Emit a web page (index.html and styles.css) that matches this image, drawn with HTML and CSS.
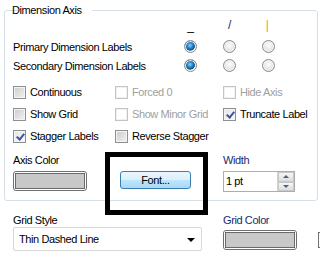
FILE: index.html
```html
<!DOCTYPE html>
<html lang="en">
<head>
  <meta charset="UTF-8" />
  <title>Axis Settings</title>
  <link rel="stylesheet" href="styles.css">
</head>
<body>
  <div class="page">
    <fieldset class="group">
      <legend>Dimension Axis</legend>

      <div class="orient">
        <span></span>
        <span class="mark mark-h">_</span>
        <span class="mark mark-d">/</span>
        <span class="mark mark-v">|</span>

        <span class="lbl">Primary Dimension Labels</span>
        <span class="radio on"></span>
        <span class="radio"></span>
        <span class="radio"></span>

        <span class="lbl">Secondary Dimension Labels</span>
        <span class="radio on"></span>
        <span class="radio"></span>
        <span class="radio"></span>
      </div>

      <div class="checks">
        <label class="chk"><span class="box"></span>Continuous</label>
        <label class="chk off"><span class="box"></span>Forced 0</label>
        <label class="chk off"><span class="box"></span>Hide Axis</label>

        <label class="chk"><span class="box"></span>Show Grid</label>
        <label class="chk off"><span class="box"></span>Show Minor Grid</label>
        <label class="chk"><span class="box checked"></span>Truncate Label</label>

        <label class="chk"><span class="box checked"></span>Stagger Labels</label>
        <label class="chk"><span class="box"></span>Reverse Stagger</label>
        <span></span>
      </div>

      <div class="bottom">
        <div class="field">
          <span class="cap">Axis Color</span>
          <span class="swatch"><span></span></span>
        </div>
        <div class="font-cell">
          <button class="btn">Font...</button>
          <div class="highlight"></div>
        </div>
        <div class="field">
          <span class="cap navy">Width</span>
          <div class="spin">
            <span class="spin-val">1 pt</span>
            <span class="spin-btns">
              <span class="up"></span>
              <span class="down"></span>
            </span>
          </div>
        </div>
      </div>
    </fieldset>

    <div class="below">
      <div class="field">
        <span class="cap">Grid Style</span>
        <div class="select">Thin Dashed Line<span class="arrow"></span></div>
      </div>
      <div class="field">
        <span class="cap navy">Grid Color</span>
        <span class="swatch"><span></span></span>
      </div>
      <span class="stub"></span>
    </div>
  </div>
</body>
</html>
```

FILE: styles.css
```css
body {
  margin: 0;
  background: #fff;
  font-family: "Liberation Sans", Arial, sans-serif;
  font-size: 11px;
  letter-spacing: -0.4px;
  color: #000;
  overflow: hidden;
}
.page {
  width: 320px;
  height: 260px;
  padding-top: 4px;
  box-sizing: border-box;
}
.group {
  margin: 0 2px 0 4px;
  padding: 0 0 0 8px;
  height: 197px;
  border: 1px solid #d5dfe5;
  border-radius: 3px;
  box-sizing: border-box;
  position: relative;
}
.group legend {
  margin-left: 6px;
  padding: 0 2px 0 1px;
  line-height: 13px;
  position: relative;
  left: -8px;
}

/* orientation radios */
.orient {
  display: grid;
  grid-template-columns: 158px 39px 39px 39px;
  grid-template-rows: 20px 19px 19px;
  align-items: center;
  justify-items: center;
}
.orient .lbl {
  justify-self: start;
}
.mark {
  font-size: 12px;
  line-height: 12px;
  align-self: start;
}
.mark-h { color: #000; margin-top: 3px; }
.mark-d { color: #20305a; margin-top: 2px; }
.mark-v { color: #e89a3c; margin-top: 2px; margin-right: 3px; }
.radio {
  width: 11px;
  height: 11px;
  border: 1px solid #8a8a8a;
  border-radius: 50%;
  background: radial-gradient(circle at 50% 40%, #fdfdfd 0, #e6e6e6 55%, #cfcfcf 100%);
  box-shadow: inset 0 0 0 1px #f4f4f4;
}
.radio.on {
  background: radial-gradient(circle at 45% 40%, #8fd0f4 0, #1b7fc4 35%, #0c4d86 55%, #e0e0e0 62%, #f0f0f0 100%);
}

/* checkboxes */
.checks {
  display: grid;
  grid-template-columns: 102px 108px 1fr;
  grid-auto-rows: 22px;
  align-items: center;
  margin-top: 6px;
}
.chk {
  display: flex;
  align-items: center;
  gap: 4px;
  white-space: nowrap;
}
.box {
  width: 11px;
  height: 11px;
  border: 1px solid #8e8f8f;
  background: linear-gradient(135deg, #cbcbcb, #f2f2f2);
  box-shadow: inset 0 0 0 1px #f4f4f4;
  position: relative;
}
.chk.off { color: #a0a0a0; }
.chk.off .box {
  border-color: #c4c4c4;
  background: #fff;
  box-shadow: inset 0 0 0 1px #f0f0f0;
}
.box.checked {
  background: linear-gradient(135deg, #e4e4e4, #fbfbfb);
}
.box.checked::after {
  content: "";
  position: absolute;
  left: 4px;
  top: 1px;
  width: 3px;
  height: 6px;
  border: solid #3a55a8;
  border-width: 0 2px 2px 0;
  transform: rotate(40deg);
}

/* bottom row inside group */
.bottom {
  display: grid;
  grid-template-columns: 107px 103px 1fr;
  margin-top: 7px;
}
.field {
  display: flex;
  flex-direction: column;
  gap: 4px;
}
.cap {
  line-height: 13px;
}
.navy { color: #1a2a6a; }
.swatch {
  width: 74px;
  height: 20px;
  border: 1px solid #707070;
  border-radius: 3px;
  box-sizing: border-box;
  padding: 1px;
  background: #fff;
}
.swatch span {
  display: block;
  height: 100%;
  border: 1px solid #6a6a6a;
  box-sizing: border-box;
  background: #c8c8c8;
}
.font-cell {
  position: relative;
  padding-top: 17px;
}
.btn {
  margin: 0;
  width: 71px;
  height: 18px;
  padding: 0;
  font-family: inherit;
  font-size: 11px;
  letter-spacing: inherit;
  color: #000;
  border: 1px solid #3c7fb1;
  border-radius: 3px;
  background: linear-gradient(#eaf6fd 0, #d9f0fc 50%, #bee6fd 51%, #a7d9f5 100%);
}
.highlight {
  position: absolute;
  left: -15px;
  top: -2px;
  width: 103px;
  height: 63px;
  border: 5px solid #000;
  box-sizing: border-box;
}
.spin {
  display: flex;
  width: 72px;
  height: 21px;
  border: 1px solid #abadb3;
  box-sizing: border-box;
}
.spin-val {
  flex: 1;
  padding: 3px 0 0 2px;
  line-height: 13px;
}
.spin-btns {
  width: 16px;
  display: flex;
  flex-direction: column;
  border-left: 1px solid #d0d0d0;
}
.spin-btns span {
  flex: 1;
  background: linear-gradient(#f5f5f5, #dedede);
  border: 1px solid #c8c8c8;
  position: relative;
}
.spin-btns .up::after,
.spin-btns .down::after {
  content: "";
  position: absolute;
  left: 4px;
  border-left: 3px solid transparent;
  border-right: 3px solid transparent;
}
.spin-btns .up::after {
  top: 2px;
  border-bottom: 3px solid #4d6185;
}
.spin-btns .down::after {
  top: 2px;
  border-top: 3px solid #4d6185;
}

/* below the group */
.below {
  display: grid;
  grid-template-columns: 210px 95px 1fr;
  padding-left: 13px;
  margin-top: 13px;
}
.below .field { gap: 0; }
.below .field:nth-child(2) .swatch { margin-top: 3px; }
.select {
  width: 189px;
  height: 24px;
  border: 1px solid #d8d8d8;
  border-radius: 2px;
  box-sizing: border-box;
  padding: 5px 0 0 5px;
  line-height: 13px;
  position: relative;
}
.arrow {
  position: absolute;
  right: 6px;
  top: 10px;
  border-left: 4px solid transparent;
  border-right: 4px solid transparent;
  border-top: 4px solid #000;
}
.stub {
  margin-top: 18px;
  height: 14px;
  border: 1px solid #707070;
  border-right: none;
}
```
